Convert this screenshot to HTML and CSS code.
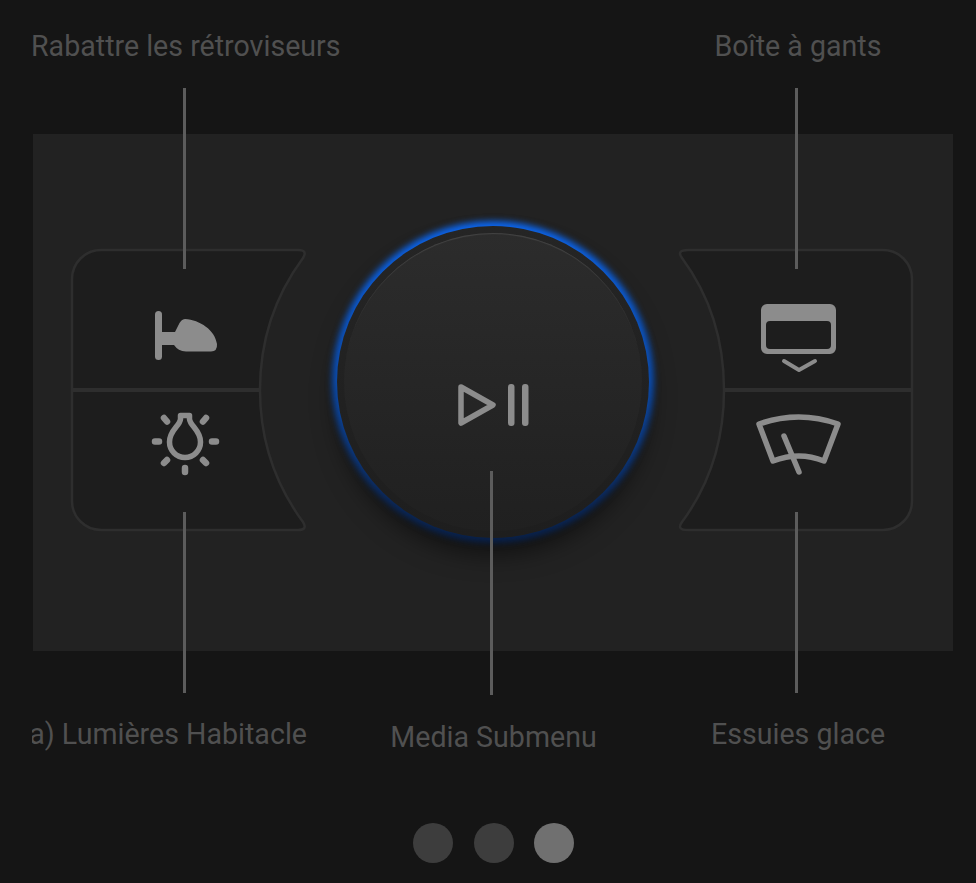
FILE: index.html
```html
<!DOCTYPE html>
<html lang="en">

<head>
    <meta charset="UTF-8">
    <meta name="viewport" content="width=device-width, initial-scale=1.0">
    <title>Commandes</title>
    <link rel="stylesheet" href="styles.css">
</head>

<body>
    <div class="page">
        <div class="labels top">
            <div class="label">Rabattre les rétroviseurs</div>
            <div></div>
            <div class="label">Boîte à gants</div>
        </div>

        <div class="panel">
            <svg class="pad" viewBox="70 248 238 286">
                <path class="pad-shape" d="M101 250H298Q308 250 303 258C272 300 260 345 260 390C260 435 272 480 303 522Q308 530 298 530H101A29 29 0 0 1 72 501V279A29 29 0 0 1 101 250Z" />
                <path class="pad-line" d="M72 390H260" />
                <rect class="glyph" x="155" y="311" width="7" height="49" rx="3.5" />
                <path class="glyph" d="M160 332H176V345H160Z" />
                <path class="glyph" d="M185 319C200 320 215 330 217 344Q217.5 351.5 211 351.5H186Q178 351 174 345L172 338L178 326Q181 319 185 319Z" />
                <path class="glyph-line" d="M180.5 415.5H189.500V419C190 426 200.5 430 200.5 442A15.5 15.5 0 0 1 169.5 442C169.5 430 180 426 180.5 419Z" />
                <path class="glyph-ray" d="M155 441.500H159M212 441.500H216M185 468V472M164 418L167 421.500M206 418L203 421.500M164 463L167 460M206 463L203 460" />
            </svg>

            <div class="dial">
                <div class="dial-face">
                    <svg class="play" viewBox="456 381 75 46">
                        <path class="glyph-line" d="M461 386L493 404L461 422Z" />
                        <rect class="glyph" x="508" y="383" width="6.500" height="42" rx="3" />
                        <rect class="glyph" x="522" y="383" width="6.500" height="42" rx="3" />
                    </svg>
                </div>
            </div>

            <svg class="pad" viewBox="678 248 238 286">
                <path class="pad-shape" d="M883 250H688Q676 250 682 258C713 300 724 345 724 390C724 435 713 480 682 522Q676 530 688 530H883A29 29 0 0 0 912 501V279A29 29 0 0 0 883 250Z" />
                <path class="pad-line" d="M724 390H912" />
                <path class="glyph" fill-rule="evenodd" d="M767 304H830A6 6 0 0 1 836 310V348A6 6 0 0 1 830 354H767A6 6 0 0 1 761 348V310A6 6 0 0 1 767 304ZM770 321A4 4 0 0 0 766 325V345A4 4 0 0 0 770 349H827A4 4 0 0 0 831 345V325A4 4 0 0 0 827 321Z" />
                <path class="glyph-thin" d="M784 361L799 370L815 361" />
                <path class="glyph-line" d="M759 424Q799 410 838 424L824 461Q799 451 773 461Z" />
                <path class="glyph-line" d="M784 436L799 472" />
            </svg>
        </div>

        <div class="labels bottom">
            <div class="label clipped"><span>a) Lumières Habitacle</span></div>
            <div class="label lower">Media Submenu</div>
            <div class="label">Essuies glace</div>
        </div>

        <div class="dots">
            <span class="dot"></span>
            <span class="dot"></span>
            <span class="dot active"></span>
        </div>

        <!-- leader lines -->
        <span class="lead lead-tl"></span>
        <span class="lead lead-tr"></span>
        <span class="lead lead-bl"></span>
        <span class="lead lead-bc"></span>
        <span class="lead lead-br"></span>
    </div>
</body>

</html>
```

FILE: styles.css
```css
* {
    box-sizing: border-box;
}

body {
    margin: 0;
    background-color: #151515;
    font-family: Roboto, "Liberation Sans", sans-serif;
}

.page {
    position: relative;
    width: 976px;
    height: 883px;
    overflow: hidden;
}

/* labels */

.labels {
    display: grid;
    grid-template-columns: 308px 306px 306px;
    padding-left: 31px;
}

.labels.top {
    height: 134px;
    padding-top: 28px;
}

.labels.bottom {
    height: 172px;
    padding-top: 65px;
}

.label {
    font-size: 28.6px;
    line-height: 36px;
    height: 36px;
    color: #505050;
    text-align: center;
    white-space: nowrap;
}

.label.lower {
    padding-top: 3px;
    height: 39px;
    padding-left: 3px;
}

.label.clipped {
    display: flex;
    justify-content: flex-end;
    overflow: hidden;
    margin-left: 1px;
    padding-right: 32px;
}

/* panel */

.panel {
    display: grid;
    grid-template-columns: 238px 312px 238px;
    column-gap: 29px;
    align-items: start;
    width: 920px;
    height: 517px;
    margin-left: 33px;
    padding: 114px 0 0 37px;
    background-color: #222222;
}

.pad {
    display: block;
    width: 238px;
    height: 286px;
}

.pad-shape {
    fill: #1d1d1d;
    stroke: #2e2e2e;
    stroke-width: 2.5;
}

.pad-line {
    fill: none;
    stroke: #2e2e2e;
    stroke-width: 4;
}

.glyph {
    fill: #8c8c8c;
}

.glyph-line {
    fill: none;
    stroke: #8c8c8c;
    stroke-width: 5.5;
    stroke-linecap: round;
    stroke-linejoin: round;
}

.glyph-thin {
    fill: none;
    stroke: #8c8c8c;
    stroke-width: 4;
    stroke-linecap: round;
    stroke-linejoin: round;
}

.glyph-ray {
    fill: none;
    stroke: #8c8c8c;
    stroke-width: 6.5;
    stroke-linecap: round;
}

/* dial */

.dial {
    position: relative;
    width: 312px;
    height: 312px;
    margin-top: -22px;
    padding: 7px;
    border-radius: 50%;
    box-shadow: 0 16px 24px rgba(0, 0, 0, 0.5);
}

.dial::before {
    content: "";
    position: absolute;
    inset: -5px;
    border-radius: 50%;
    background: linear-gradient(#0b66f0, #0a4cb0 50%, #0a2a60 85%, #08204a);
    filter: blur(3px);
}

.dial::after {
    content: "";
    position: absolute;
    inset: 0;
    border-radius: 50%;
    background: linear-gradient(#252525, #1e1e1e);
}

.dial-face {
    position: relative;
    z-index: 1;
    display: flex;
    justify-content: center;
    align-items: center;
    width: 298px;
    height: 298px;
    padding-top: 46px;
    border-radius: 50%;
    background: linear-gradient(#2c2c2c, #202020);
    box-shadow: inset 0 2px 1px -1px #444444;
}

.play {
    display: block;
    width: 75px;
    height: 46px;
}

/* dots */

.dots {
    display: flex;
    justify-content: center;
    gap: 20.5px;
    padding-left: 11px;
}

.dot {
    width: 40px;
    height: 40px;
    border-radius: 50%;
    background-color: #3d3d3d;
}

.dot.active {
    background-color: #707070;
}

/* leader lines sit over the panel */

.lead {
    position: absolute;
    z-index: 2;
    width: 3px;
    background-color: #5c5c5c;
}

.lead-tl {
    left: 183px;
    top: 88px;
    height: 181px;
}

.lead-tr {
    left: 795px;
    top: 88px;
    height: 181px;
}

.lead-bl {
    left: 183px;
    top: 512px;
    height: 181px;
}

.lead-bc {
    left: 490px;
    top: 471px;
    height: 224px;
}

.lead-br {
    left: 795px;
    top: 512px;
    height: 181px;
}
```
